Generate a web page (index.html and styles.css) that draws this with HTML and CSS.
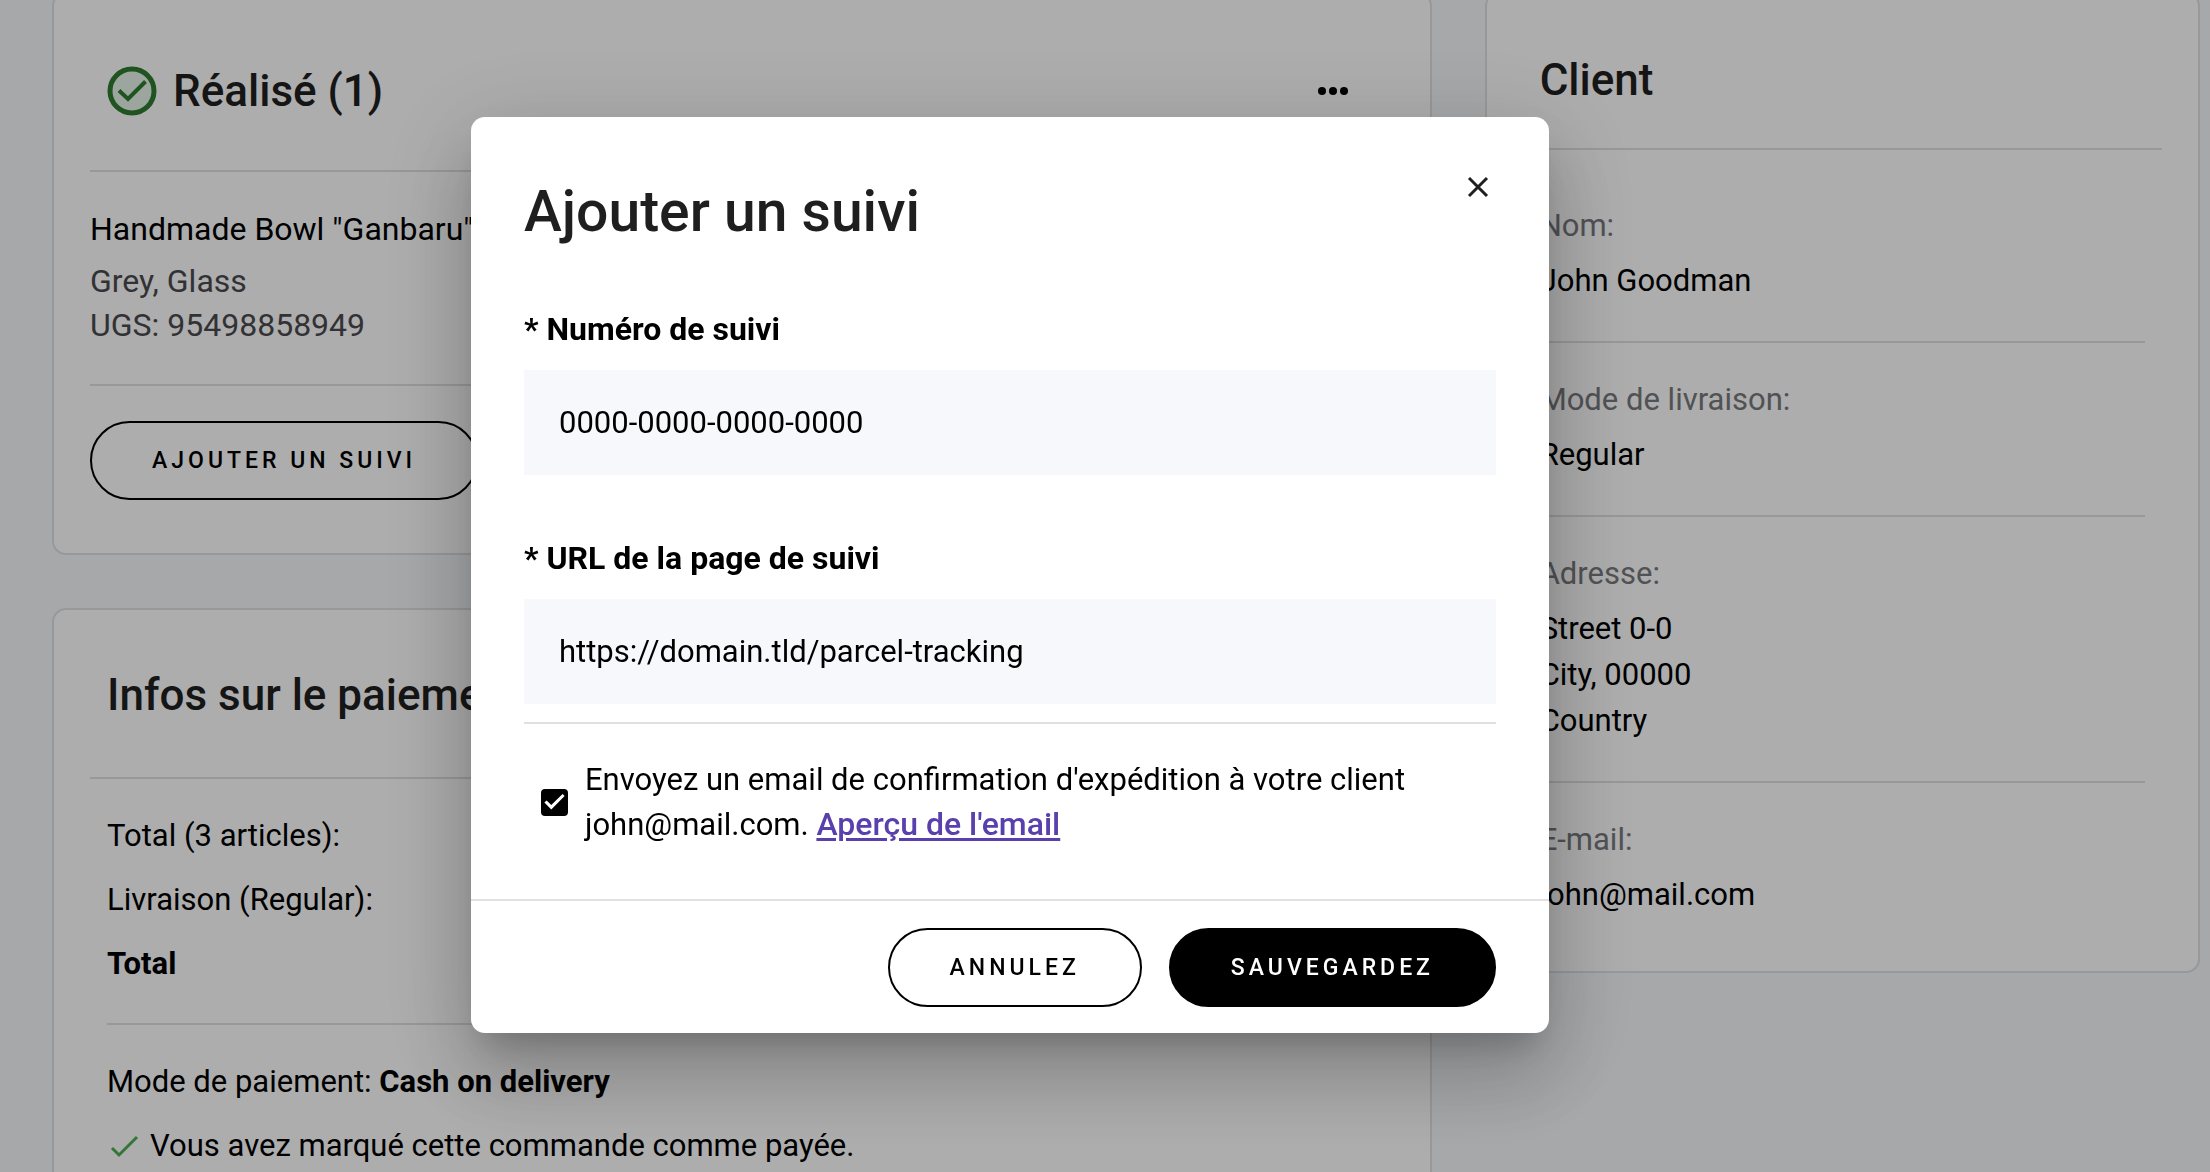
FILE: index.html
```
<!DOCTYPE html>
<html lang="fr">
<head>
    <meta charset="UTF-8">
    <meta name="viewport" content="width=device-width, initial-scale=1.0">
    <title>Ajouter un suivi</title>
    <link rel="stylesheet" href="styles.css">
</head>
<body>
    <main class="page">
        <div class="column">
            <section class="card">
                <div class="card-header order-header">
                    <svg class="status-icon" viewBox="0 0 50 50" aria-hidden="true">
                        <circle cx="25" cy="25" r="22" fill="#e8f5e9" stroke="#2e7d32" stroke-width="5"/>
                        <path d="M12 24.500L21 33L38.500 15.500" fill="none" stroke="#2e7d32" stroke-width="4"/>
                    </svg>
                    <h2>Réalisé (1)</h2>
                    <button class="more-btn" type="button" aria-label="Plus d'actions">
                        <svg viewBox="0 0 32 10" aria-hidden="true">
                            <circle cx="5" cy="5" r="4"/>
                            <circle cx="16" cy="5" r="4"/>
                            <circle cx="27" cy="5" r="4"/>
                        </svg>
                    </button>
                </div>
                <div class="product">
                    <p class="product-name">Handmade Bowl "Ganbaru"</p>
                    <p class="product-info">Grey, Glass</p>
                    <p class="product-info">UGS: 95498858949</p>
                </div>
                <div class="order-actions">
                    <button class="btn" type="button">AJOUTER UN SUIVI</button>
                </div>
            </section>

            <section class="card">
                <div class="card-header payment-header">
                    <h2>Infos sur le paiement</h2>
                </div>
                <div class="payment-group">
                    <p>Total (3 articles):</p>
                    <p>Livraison (Regular):</p>
                    <p><strong>Total</strong></p>
                </div>
                <div class="payment-group">
                    <p>Mode de paiement: <strong>Cash on delivery</strong></p>
                    <p class="paid">
                        <svg viewBox="0 0 34 34" aria-hidden="true">
                            <path d="M5 19L12 26L30 8" fill="none" stroke="#4caf50" stroke-width="3"/>
                        </svg>
                        Vous avez marqué cette commande comme payée.
                    </p>
                </div>
            </section>
        </div>

        <section class="card">
            <div class="card-header client-header">
                <h2>Client</h2>
            </div>
            <dl class="client">
                <div class="client-row">
                    <dt>Nom:</dt>
                    <dd>John Goodman</dd>
                </div>
                <div class="client-row">
                    <dt>Mode de livraison:</dt>
                    <dd>Regular</dd>
                </div>
                <div class="client-row">
                    <dt>Adresse:</dt>
                    <dd>Street 0-0<br>City, 00000<br>Country</dd>
                </div>
                <div class="client-row">
                    <dt>E-mail:</dt>
                    <dd>john@mail.com</dd>
                </div>
            </dl>
        </section>
    </main>

    <div class="overlay">
        <form class="modal" role="dialog" aria-modal="true" aria-labelledby="modalTitle">
            <div class="modal-header">
                <h1 id="modalTitle">Ajouter un suivi</h1>
                <button class="close-btn" type="button" aria-label="Fermer">
                    <svg viewBox="0 0 36 36" aria-hidden="true">
                        <path d="M9 9L27 27M27 9L9 27" fill="none" stroke="#1f1f1f" stroke-width="3"/>
                    </svg>
                </button>
            </div>
            <div class="modal-body">
                <div class="field">
                    <label for="trackingNumber">* Numéro de suivi</label>
                    <input type="text" id="trackingNumber" value="0000-0000-0000-0000" required>
                </div>
                <div class="field">
                    <label for="trackingUrl">* URL de la page de suivi</label>
                    <input type="text" id="trackingUrl" value="https://domain.tld/parcel-tracking" required>
                </div>
                <div class="notify">
                    <input type="checkbox" id="notify" checked>
                    <p>
                        <label for="notify">Envoyez un email de confirmation d'expédition à votre client</label>
                        <label for="notify">john@mail.com.</label>
                        <a href="#apercu">Aperçu de l'email</a>
                    </p>
                </div>
            </div>
            <div class="modal-footer">
                <button class="btn" type="button">ANNULEZ</button>
                <button class="btn btn-primary" type="submit">SAUVEGARDEZ</button>
            </div>
        </form>
    </div>
</body>
</html>
```
FILE: styles.css
```
* {
    box-sizing: border-box;
}
body {
    height: 100vh;
    margin: 0;
    overflow: hidden;
    background: #f5f8fb;
    color: #000;
    font-family: Roboto, "Liberation Sans", sans-serif;
    font-size: 31px;
    line-height: 46px;
}
h1, h2, p, dl, dd {
    margin: 0;
}
h1, h2 {
    color: #1f1f1f;
    font-weight: 500;
}
h2 {
    font-size: 44px;
    line-height: 56px;
}
button, input {
    font-family: inherit;
}
button {
    cursor: pointer;
}

/* Order page */
.page {
    display: grid;
    grid-template-columns: minmax(0, 27fr) minmax(0, 14fr);
    align-items: start;
    gap: 53px;
    margin-top: -8px;
    padding: 0 10px 0 52px;
}
.column {
    display: flex;
    flex-direction: column;
    gap: 53px;
}
.card {
    padding: 0 36px;
    background: #fff;
    border: 2px solid #dfe1e4;
    border-radius: 14px;
}
.card-header {
    display: flex;
    align-items: center;
    padding: 57px 17px 54px;
    border-bottom: 2px solid #e0e0e0;
}
.order-header {
    padding-top: 69px;
    padding-bottom: 51px;
}
.client-header {
    padding-top: 58px;
    padding-bottom: 40px;
}
.status-icon {
    width: 50px;
    height: 50px;
    margin-right: 16px;
}
.more-btn {
    display: flex;
    margin-left: auto;
    margin-right: 28px;
    padding: 0;
    background: none;
    border: none;
}
.more-btn svg {
    width: 32px;
    height: 10px;
}
.product {
    padding: 35px 0 37px;
    border-bottom: 2px solid #e0e0e0;
    font-size: 32px;
    line-height: 44px;
}
.product-name {
    margin-bottom: 8px;
}
.product-info {
    color: #4a4b4f;
}
.order-actions {
    padding: 35px 0 53px;
}
.btn {
    height: 79px;
    padding: 0 60px;
    background: none;
    border: 2px solid #000;
    border-radius: 40px;
    color: #000;
    font-size: 23px;
    font-weight: 500;
    letter-spacing: 4px;
}
.btn-primary {
    background: #000;
    color: #fff;
}
.payment-group {
    display: flex;
    flex-direction: column;
    gap: 18px;
    margin: 0 17px;
    padding: 34px 0 36px;
}
.payment-group + .payment-group {
    border-top: 2px solid #e0e0e0;
}
.paid {
    display: flex;
    align-items: center;
    gap: 9px;
}
.paid svg {
    width: 34px;
    height: 34px;
}
.client {
    padding: 19px 17px 16px;
}
.client-row {
    padding: 34px 0 37px;
}
.client-row + .client-row {
    border-top: 2px solid #e0e0e0;
}
.client-row dt {
    margin-bottom: 9px;
    color: #77797d;
}

/* Tracking modal */
.overlay {
    position: fixed;
    inset: 0;
    padding: 117px 30px 0 471px;
    background: rgba(0, 0, 0, 0.32);
}
.modal {
    max-width: 1078px;
    background: #fff;
    border-radius: 14px;
    box-shadow: 0 22px 30px -14px rgba(0, 0, 0, 0.2),
        0 48px 76px 6px rgba(0, 0, 0, 0.14),
        0 18px 92px 16px rgba(0, 0, 0, 0.12);
}
.modal-header {
    display: flex;
    align-items: flex-start;
    justify-content: space-between;
    padding: 52px 53px 59px;
}
.modal-header h1 {
    padding-top: 7px;
    font-size: 57px;
    line-height: 72px;
}
.close-btn {
    display: flex;
    padding: 0;
    background: none;
    border: none;
}
.close-btn svg {
    width: 36px;
    height: 36px;
}
.modal-body {
    padding: 0 53px 52px;
}
.field {
    margin-bottom: 61px;
}
.field:nth-child(2) {
    margin-bottom: 18px;
}
.field label {
    display: block;
    margin-bottom: 19px;
    font-size: 32px;
    font-weight: 700;
    line-height: 44px;
}
.field input {
    display: block;
    width: 100%;
    height: 105px;
    padding: 0 35px;
    background: #f6f8fc;
    border: none;
    color: #000;
    font-size: 31px;
}
.notify {
    display: flex;
    align-items: center;
    gap: 17px;
    padding: 34px 0 0 17px;
    border-top: 2px solid #e0e0e0;
    line-height: 44px;
}
.notify input {
    display: grid;
    flex: none;
    width: 27px;
    height: 27px;
    margin: 0;
    appearance: none;
    border: 2px solid #000;
    border-radius: 4px;
}
.notify input:checked {
    background: #000;
}
.notify input:checked::before {
    content: "";
    background: #fff;
    clip-path: polygon(6% 50%, 36% 80%, 94% 22%, 85% 13%, 36% 61%, 16% 41%);
}
.notify a {
    color: #5940ad;
    font-size: 32px;
    font-weight: 500;
    text-decoration-thickness: 3px;
    text-underline-offset: 3px;
}
.modal-footer {
    display: flex;
    justify-content: flex-end;
    gap: 27px;
    padding: 27px 53px 26px;
    border-top: 2px solid #e0e0e0;
}
```
